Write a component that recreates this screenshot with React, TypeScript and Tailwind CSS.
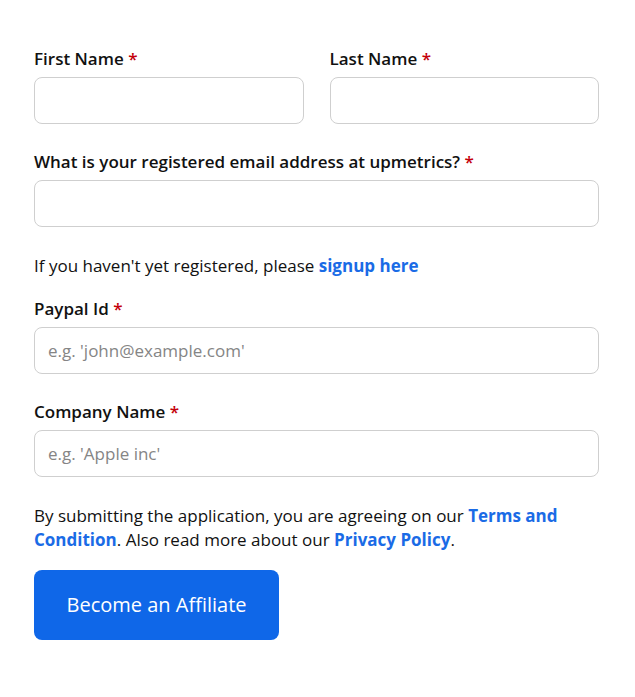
const FONT = "font-['Open_Sans','Noto_Sans',sans-serif]";

function Label({ children }: { children: React.ReactNode }) {
  return (
    <label className="block text-[17px] font-semibold leading-6 text-[#111]">
      {children} <span className="text-[#c4000b]">*</span>
    </label>
  );
}

function Input({ placeholder }: { placeholder?: string }) {
  return (
    <input
      type="text"
      placeholder={placeholder}
      className="mt-1.5 block h-[47px] w-full rounded-lg border border-[#cfcfcf] bg-white px-[13px] text-[17px] text-[#111] outline-none placeholder:text-[#858585]"
    />
  );
}

export default function App() {
  return (
    <div className={`${FONT} min-h-screen bg-white px-[34px] pt-[47px] text-[#111]`}>
      <form className="w-[565px]">
        <div className="flex gap-[26px]">
          <div className="flex-1">
            <Label>First Name</Label>
            <Input />
          </div>
          <div className="flex-1">
            <Label>Last Name</Label>
            <Input />
          </div>
        </div>

        <div className="mt-[26px]">
          <Label>What is your registered email address at upmetrics?</Label>
          <Input />
        </div>

        <p className="mt-[27px] text-[17px] leading-6">
          If you haven't yet registered, please{" "}
          <a className="font-bold text-[#1a6be6]">signup here</a>
        </p>

        <div className="mt-[19px]">
          <Label>Paypal Id</Label>
          <Input placeholder="e.g. 'john@example.com'" />
        </div>

        <div className="mt-[26px]">
          <Label>Company Name</Label>
          <Input placeholder="e.g. 'Apple inc'" />
        </div>

        <p className="mt-[27px] text-[17px] leading-6">
          By submitting the application, you are agreeing on our{" "}
          <a className="font-bold text-[#1a6be6]">Terms and Condition</a>. Also read more about our{" "}
          <a className="font-bold text-[#1a6be6]">Privacy Policy</a>.
        </p>

        <button
          type="button"
          className="mt-[18px] h-[70px] w-[245px] rounded-lg bg-[#0f67e8] text-[20px] font-medium text-white"
        >
          Become an Affiliate
        </button>
      </form>
    </div>
  );
}
